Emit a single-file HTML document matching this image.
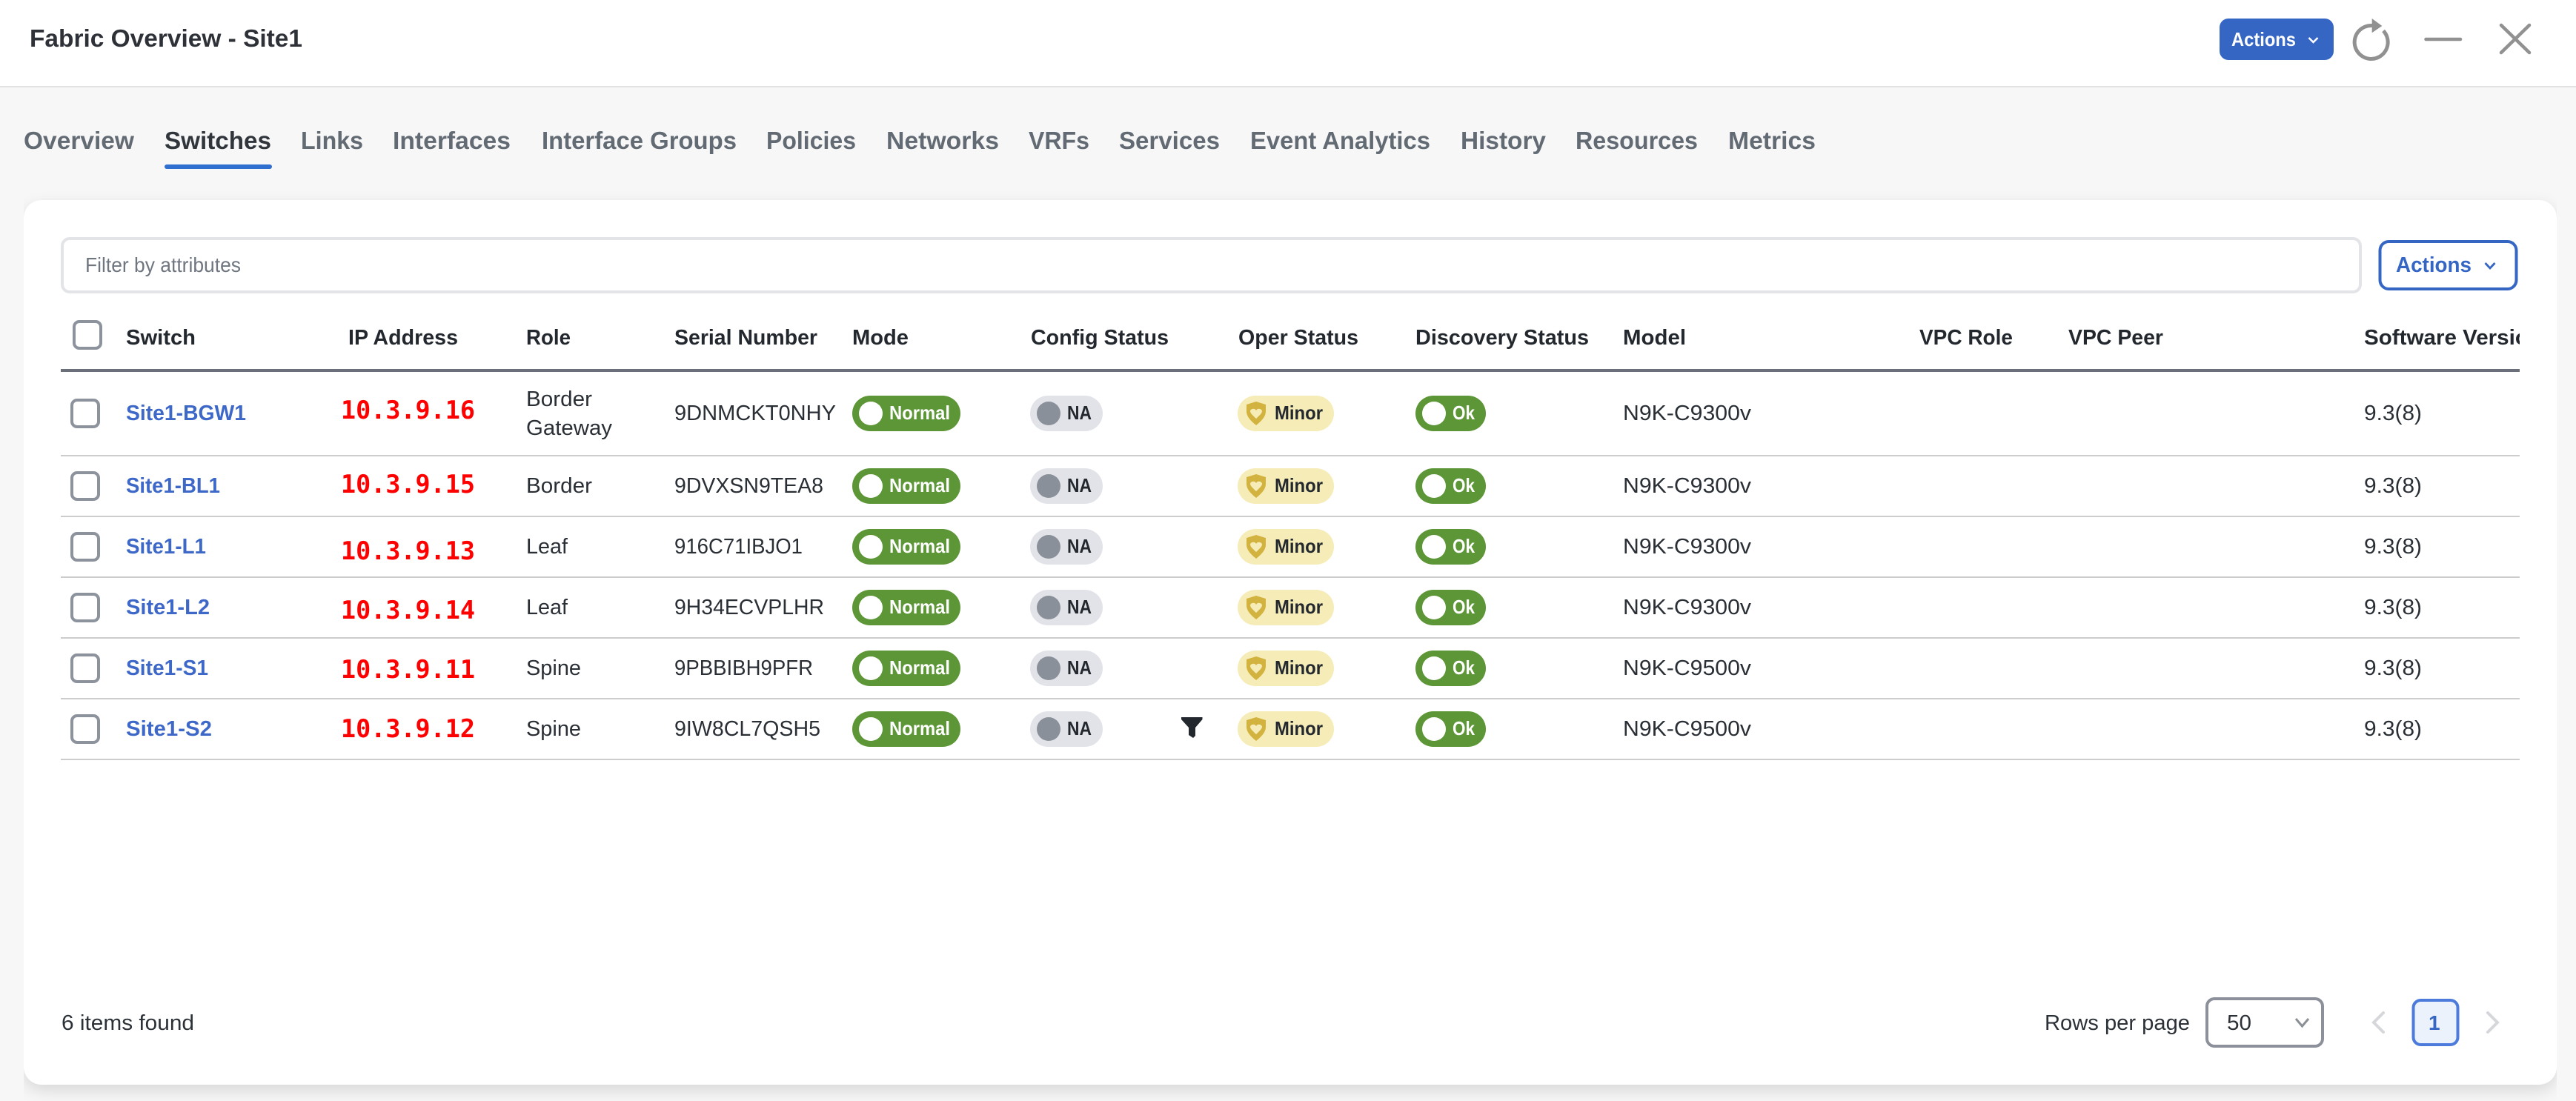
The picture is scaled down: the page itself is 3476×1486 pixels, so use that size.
<!DOCTYPE html>
<html lang="en">
<head>
<meta charset="utf-8">
<title>Fabric Overview - Site1</title>
<style>
html,body{margin:0;padding:0;width:3476px;height:1486px;overflow:hidden;background:#f7f7f7}
#hdr{position:absolute;left:0;top:0;width:3476px;height:116px;background:#fff;border-bottom:2px solid #e2e2e2}
#clip{position:absolute;left:32px;top:0;width:3418px;height:1486px;overflow:hidden}
#card{position:absolute;left:0;top:270px;width:3418px;height:1194px;background:#fff;border-radius:24px;box-shadow:0 8px 22px rgba(0,0,0,.13)}
svg{position:absolute;left:0;top:0}
text{font-family:"Liberation Sans",Arial,sans-serif;white-space:pre}
.tab{font-size:33px;font-weight:700;fill:#626a73}
.th{font-size:29px;font-weight:700;fill:#23282e}
.td{font-size:29px;fill:#2a2f36}
.ln{font-size:29px;font-weight:700;fill:#3d68c8}
.ip{font-family:"DejaVu Sans Mono",monospace;font-size:34px;font-weight:700;fill:#ff0000}
.w{font-size:26px;font-weight:700;fill:#fff}
.k{font-size:26px;font-weight:700;fill:#23282e}
.ft{font-size:29px;fill:#2c3138}
</style>
</head>
<body>
<div id="hdr"></div>
<div id="clip"><div id="card"></div></div>
<svg width="3476" height="1486" viewBox="0 0 3476 1486" xmlns="http://www.w3.org/2000/svg">
<defs>
<clipPath id="c"><rect x="82" y="420" width="3318" height="70"/></clipPath>
<g id="sh"><path d="M1695 -16L1708 -12V-3C1708 5 1701 11 1695 16C1689 11 1682 5 1682 -3V-12Z" fill="#d3b33f"/><path d="M1695 7C1692 4 1687 0 1687 -3C1687 -6 1693 -8 1695 -4C1697 -8 1703 -6 1703 -3C1703 0 1698 4 1695 7Z" fill="#f6ecb8"/></g>
<g id="ch"><rect x="1150" y="-24" width="146" height="48" rx="24" fill="#5c9636"/><circle cx="1175" cy="0" r="16" fill="#fff"/><rect x="1390" y="-24" width="98" height="48" rx="24" fill="#e2e3e8"/><circle cx="1415" cy="0" r="16" fill="#8a9099"/><rect x="1670" y="-24" width="130" height="48" rx="24" fill="#f6ecb8"/><use href="#sh"/><rect x="1910" y="-24" width="95" height="48" rx="24" fill="#5c9636"/><circle cx="1935" cy="0" r="16" fill="#fff"/><rect x="97" y="-18" width="36" height="36" rx="7" fill="#fff" stroke="#8d939c" stroke-width="4"/></g>
</defs>

<!-- header -->
<text x="40" y="63" font-size="33" font-weight="700" fill="#2e3238" textLength="368" lengthAdjust="spacingAndGlyphs">Fabric Overview - Site1</text>
<rect x="2995" y="25" width="154" height="56" rx="12" fill="#3666c4"/>
<text x="3011" y="62" font-size="26" font-weight="700" fill="#fff" textLength="87" lengthAdjust="spacingAndGlyphs">Actions</text>
<path d="M3115.500 51L3121.500 57L3127.500 51" fill="none" stroke="#fff" stroke-width="2.500"/>
<path d="M3216 41.500A22.500 22.500 0 1 1 3201 34.500" fill="none" stroke="#919191" stroke-width="5"/>
<path d="M3200.700 25L3214.300 35L3200.700 44.300Z" fill="#919191"/>
<path d="M3273.500 53H3320" stroke="#919191" stroke-width="4.500" stroke-linecap="round"/>
<path d="M3375 34L3413 71M3413 34L3375 71" stroke="#919191" stroke-width="4.500" stroke-linecap="round"/>

<!-- tabs -->
<text class="tab" x="32" y="201" textLength="149" lengthAdjust="spacingAndGlyphs">Overview</text>
<text class="tab" x="222" y="201" textLength="144" lengthAdjust="spacingAndGlyphs" style="fill:#31363d">Switches</text>
<rect x="222" y="222" width="145" height="6" rx="3" fill="#2f6fd0"/>
<text class="tab" x="406" y="201" textLength="84" lengthAdjust="spacingAndGlyphs">Links</text>
<text class="tab" x="530" y="201" textLength="159" lengthAdjust="spacingAndGlyphs">Interfaces</text>
<text class="tab" x="731" y="201" textLength="263" lengthAdjust="spacingAndGlyphs">Interface Groups</text>
<text class="tab" x="1034" y="201" textLength="121" lengthAdjust="spacingAndGlyphs">Policies</text>
<text class="tab" x="1196" y="201" textLength="152" lengthAdjust="spacingAndGlyphs">Networks</text>
<text class="tab" x="1388" y="201" textLength="82" lengthAdjust="spacingAndGlyphs">VRFs</text>
<text class="tab" x="1510" y="201" textLength="136" lengthAdjust="spacingAndGlyphs">Services</text>
<text class="tab" x="1687" y="201" textLength="243" lengthAdjust="spacingAndGlyphs">Event Analytics</text>
<text class="tab" x="1971" y="201" textLength="115" lengthAdjust="spacingAndGlyphs">History</text>
<text class="tab" x="2126" y="201" textLength="165" lengthAdjust="spacingAndGlyphs">Resources</text>
<text class="tab" x="2332" y="201" textLength="118" lengthAdjust="spacingAndGlyphs">Metrics</text>

<!-- filter bar -->
<rect x="84" y="322" width="3101" height="72" rx="10" fill="#fff" stroke="#e3e4e8" stroke-width="4"/>
<text x="115" y="367" font-size="28" fill="#6f7680" textLength="210" lengthAdjust="spacingAndGlyphs">Filter by attributes</text>
<rect x="3211.500" y="326" width="184" height="64" rx="12" fill="#fff" stroke="#3566c4" stroke-width="4"/>
<text x="3233" y="367" font-size="29" font-weight="700" fill="#3566c4" textLength="102" lengthAdjust="spacingAndGlyphs">Actions</text>
<path d="M3353.500 355L3360 362L3366.500 355" fill="none" stroke="#3566c4" stroke-width="2.800"/>

<!-- table header -->
<rect x="100" y="434" width="36" height="36" rx="7" fill="#fff" stroke="#8d939c" stroke-width="4"/>
<g clip-path="url(#c)">
<text class="th" x="170" y="465" textLength="94" lengthAdjust="spacingAndGlyphs">Switch</text>
<text class="th" x="470" y="465" textLength="148" lengthAdjust="spacingAndGlyphs">IP Address</text>
<text class="th" x="710" y="465" textLength="60" lengthAdjust="spacingAndGlyphs">Role</text>
<text class="th" x="910" y="465" textLength="193" lengthAdjust="spacingAndGlyphs">Serial Number</text>
<text class="th" x="1150" y="465" textLength="76" lengthAdjust="spacingAndGlyphs">Mode</text>
<text class="th" x="1391" y="465" textLength="186" lengthAdjust="spacingAndGlyphs">Config Status</text>
<text class="th" x="1671" y="465" textLength="162" lengthAdjust="spacingAndGlyphs">Oper Status</text>
<text class="th" x="1910" y="465" textLength="234" lengthAdjust="spacingAndGlyphs">Discovery Status</text>
<text class="th" x="2190" y="465" textLength="85" lengthAdjust="spacingAndGlyphs">Model</text>
<text class="th" x="2590" y="465" textLength="126" lengthAdjust="spacingAndGlyphs">VPC Role</text>
<text class="th" x="2791" y="465" textLength="128" lengthAdjust="spacingAndGlyphs">VPC Peer</text>
<text class="th" x="3190" y="465" textLength="240" lengthAdjust="spacingAndGlyphs">Software Version</text>
</g>
<rect x="82" y="498" width="3318" height="4" fill="#6b6f7a"/>
<rect x="82" y="614" width="3318" height="2" fill="#cccccc"/>
<rect x="82" y="696" width="3318" height="2" fill="#cccccc"/>
<rect x="82" y="778" width="3318" height="2" fill="#cccccc"/>
<rect x="82" y="860" width="3318" height="2" fill="#cccccc"/>
<rect x="82" y="942" width="3318" height="2" fill="#cccccc"/>
<rect x="82" y="1024" width="3318" height="2" fill="#cccccc"/>

<!-- row 1 -->
<g transform="translate(0,558)"><use href="#ch"/>
<text class="ln" x="170" y="9" textLength="162" lengthAdjust="spacingAndGlyphs">Site1-BGW1</text>
<text class="td" x="710" y="-10" textLength="89" lengthAdjust="spacingAndGlyphs">Border</text>
<text class="td" x="710" y="29" textLength="116" lengthAdjust="spacingAndGlyphs">Gateway</text>
<text class="td" x="910" y="9" textLength="218" lengthAdjust="spacingAndGlyphs">9DNMCKT0NHY</text>
<text class="w" x="1200" y="8" textLength="82" lengthAdjust="spacingAndGlyphs">Normal</text>
<text class="k" x="1440" y="8" textLength="33" lengthAdjust="spacingAndGlyphs">NA</text>
<text class="k" x="1720" y="8" textLength="65" lengthAdjust="spacingAndGlyphs">Minor</text>
<text class="w" x="1960" y="8" textLength="30" lengthAdjust="spacingAndGlyphs">Ok</text>
<text class="td" x="2190" y="9" textLength="173" lengthAdjust="spacingAndGlyphs">N9K-C9300v</text>
<text class="td" x="3190" y="9" textLength="78" lengthAdjust="spacingAndGlyphs">9.3(8)</text>
</g>
<text class="ip" x="460" y="565" textLength="181" lengthAdjust="spacingAndGlyphs">10.3.9.16</text>

<!-- row 2 -->
<g transform="translate(0,656)"><use href="#ch"/>
<text class="ln" x="170" y="9" textLength="127" lengthAdjust="spacingAndGlyphs">Site1-BL1</text>
<text class="td" x="710" y="9" textLength="89" lengthAdjust="spacingAndGlyphs">Border</text>
<text class="td" x="910" y="9" textLength="201" lengthAdjust="spacingAndGlyphs">9DVXSN9TEA8</text>
<text class="w" x="1200" y="8" textLength="82" lengthAdjust="spacingAndGlyphs">Normal</text>
<text class="k" x="1440" y="8" textLength="33" lengthAdjust="spacingAndGlyphs">NA</text>
<text class="k" x="1720" y="8" textLength="65" lengthAdjust="spacingAndGlyphs">Minor</text>
<text class="w" x="1960" y="8" textLength="30" lengthAdjust="spacingAndGlyphs">Ok</text>
<text class="td" x="2190" y="9" textLength="173" lengthAdjust="spacingAndGlyphs">N9K-C9300v</text>
<text class="td" x="3190" y="9" textLength="78" lengthAdjust="spacingAndGlyphs">9.3(8)</text>
</g>
<text class="ip" x="460" y="665" textLength="181" lengthAdjust="spacingAndGlyphs">10.3.9.15</text>

<!-- row 3 -->
<g transform="translate(0,738)"><use href="#ch"/>
<text class="ln" x="170" y="9" textLength="108" lengthAdjust="spacingAndGlyphs">Site1-L1</text>
<text class="td" x="710" y="9" textLength="56" lengthAdjust="spacingAndGlyphs">Leaf</text>
<text class="td" x="910" y="9" textLength="173" lengthAdjust="spacingAndGlyphs">916C71IBJO1</text>
<text class="w" x="1200" y="8" textLength="82" lengthAdjust="spacingAndGlyphs">Normal</text>
<text class="k" x="1440" y="8" textLength="33" lengthAdjust="spacingAndGlyphs">NA</text>
<text class="k" x="1720" y="8" textLength="65" lengthAdjust="spacingAndGlyphs">Minor</text>
<text class="w" x="1960" y="8" textLength="30" lengthAdjust="spacingAndGlyphs">Ok</text>
<text class="td" x="2190" y="9" textLength="173" lengthAdjust="spacingAndGlyphs">N9K-C9300v</text>
<text class="td" x="3190" y="9" textLength="78" lengthAdjust="spacingAndGlyphs">9.3(8)</text>
</g>
<text class="ip" x="460" y="755" textLength="181" lengthAdjust="spacingAndGlyphs">10.3.9.13</text>

<!-- row 4 -->
<g transform="translate(0,820)"><use href="#ch"/>
<text class="ln" x="170" y="9" textLength="113" lengthAdjust="spacingAndGlyphs">Site1-L2</text>
<text class="td" x="710" y="9" textLength="56" lengthAdjust="spacingAndGlyphs">Leaf</text>
<text class="td" x="910" y="9" textLength="202" lengthAdjust="spacingAndGlyphs">9H34ECVPLHR</text>
<text class="w" x="1200" y="8" textLength="82" lengthAdjust="spacingAndGlyphs">Normal</text>
<text class="k" x="1440" y="8" textLength="33" lengthAdjust="spacingAndGlyphs">NA</text>
<text class="k" x="1720" y="8" textLength="65" lengthAdjust="spacingAndGlyphs">Minor</text>
<text class="w" x="1960" y="8" textLength="30" lengthAdjust="spacingAndGlyphs">Ok</text>
<text class="td" x="2190" y="9" textLength="173" lengthAdjust="spacingAndGlyphs">N9K-C9300v</text>
<text class="td" x="3190" y="9" textLength="78" lengthAdjust="spacingAndGlyphs">9.3(8)</text>
</g>
<text class="ip" x="460" y="835" textLength="181" lengthAdjust="spacingAndGlyphs">10.3.9.14</text>

<!-- row 5 -->
<g transform="translate(0,902)"><use href="#ch"/>
<text class="ln" x="170" y="9" textLength="111" lengthAdjust="spacingAndGlyphs">Site1-S1</text>
<text class="td" x="710" y="9" textLength="74" lengthAdjust="spacingAndGlyphs">Spine</text>
<text class="td" x="910" y="9" textLength="187" lengthAdjust="spacingAndGlyphs">9PBBIBH9PFR</text>
<text class="w" x="1200" y="8" textLength="82" lengthAdjust="spacingAndGlyphs">Normal</text>
<text class="k" x="1440" y="8" textLength="33" lengthAdjust="spacingAndGlyphs">NA</text>
<text class="k" x="1720" y="8" textLength="65" lengthAdjust="spacingAndGlyphs">Minor</text>
<text class="w" x="1960" y="8" textLength="30" lengthAdjust="spacingAndGlyphs">Ok</text>
<text class="td" x="2190" y="9" textLength="173" lengthAdjust="spacingAndGlyphs">N9K-C9500v</text>
<text class="td" x="3190" y="9" textLength="78" lengthAdjust="spacingAndGlyphs">9.3(8)</text>
</g>
<text class="ip" x="460" y="915" textLength="181" lengthAdjust="spacingAndGlyphs">10.3.9.11</text>

<!-- row 6 -->
<g transform="translate(0,984)"><use href="#ch"/>
<text class="ln" x="170" y="9" textLength="116" lengthAdjust="spacingAndGlyphs">Site1-S2</text>
<text class="td" x="710" y="9" textLength="74" lengthAdjust="spacingAndGlyphs">Spine</text>
<text class="td" x="910" y="9" textLength="197" lengthAdjust="spacingAndGlyphs">9IW8CL7QSH5</text>
<text class="w" x="1200" y="8" textLength="82" lengthAdjust="spacingAndGlyphs">Normal</text>
<text class="k" x="1440" y="8" textLength="33" lengthAdjust="spacingAndGlyphs">NA</text>
<text class="k" x="1720" y="8" textLength="65" lengthAdjust="spacingAndGlyphs">Minor</text>
<text class="w" x="1960" y="8" textLength="30" lengthAdjust="spacingAndGlyphs">Ok</text>
<text class="td" x="2190" y="9" textLength="173" lengthAdjust="spacingAndGlyphs">N9K-C9500v</text>
<text class="td" x="3190" y="9" textLength="78" lengthAdjust="spacingAndGlyphs">9.3(8)</text>
</g>
<text class="ip" x="460" y="995" textLength="181" lengthAdjust="spacingAndGlyphs">10.3.9.12</text>
<path d="M1594 968H1622.500V971L1613 982V993L1610 996L1604 992V982L1594 971Z" fill="#23282e"/>

<!-- footer -->
<text class="ft" x="83" y="1390" textLength="179" lengthAdjust="spacingAndGlyphs">6 items found</text>
<text class="ft" x="2759" y="1390" textLength="196" lengthAdjust="spacingAndGlyphs">Rows per page</text>
<rect x="2978" y="1348" width="156" height="64" rx="10" fill="#fff" stroke="#8b909a" stroke-width="4"/>
<text class="ft" x="3005" y="1390" textLength="33" lengthAdjust="spacingAndGlyphs">50</text>
<path d="M3098 1375L3106.500 1385L3115 1375" fill="none" stroke="#8b8f96" stroke-width="3"/>
<path d="M3216 1367L3203 1380L3216 1393" fill="none" stroke="#d5d7da" stroke-width="4" stroke-linecap="round"/>
<rect x="3256.500" y="1350" width="60" height="60" rx="10" fill="#ebf2fc" stroke="#4c7bdc" stroke-width="4"/>
<text x="3277" y="1390" font-size="28" font-weight="700" fill="#3566c4">1</text>
<path d="M3357 1367L3370 1380L3357 1393" fill="none" stroke="#d5d7da" stroke-width="4" stroke-linecap="round"/>
</svg>
</body>
</html>
